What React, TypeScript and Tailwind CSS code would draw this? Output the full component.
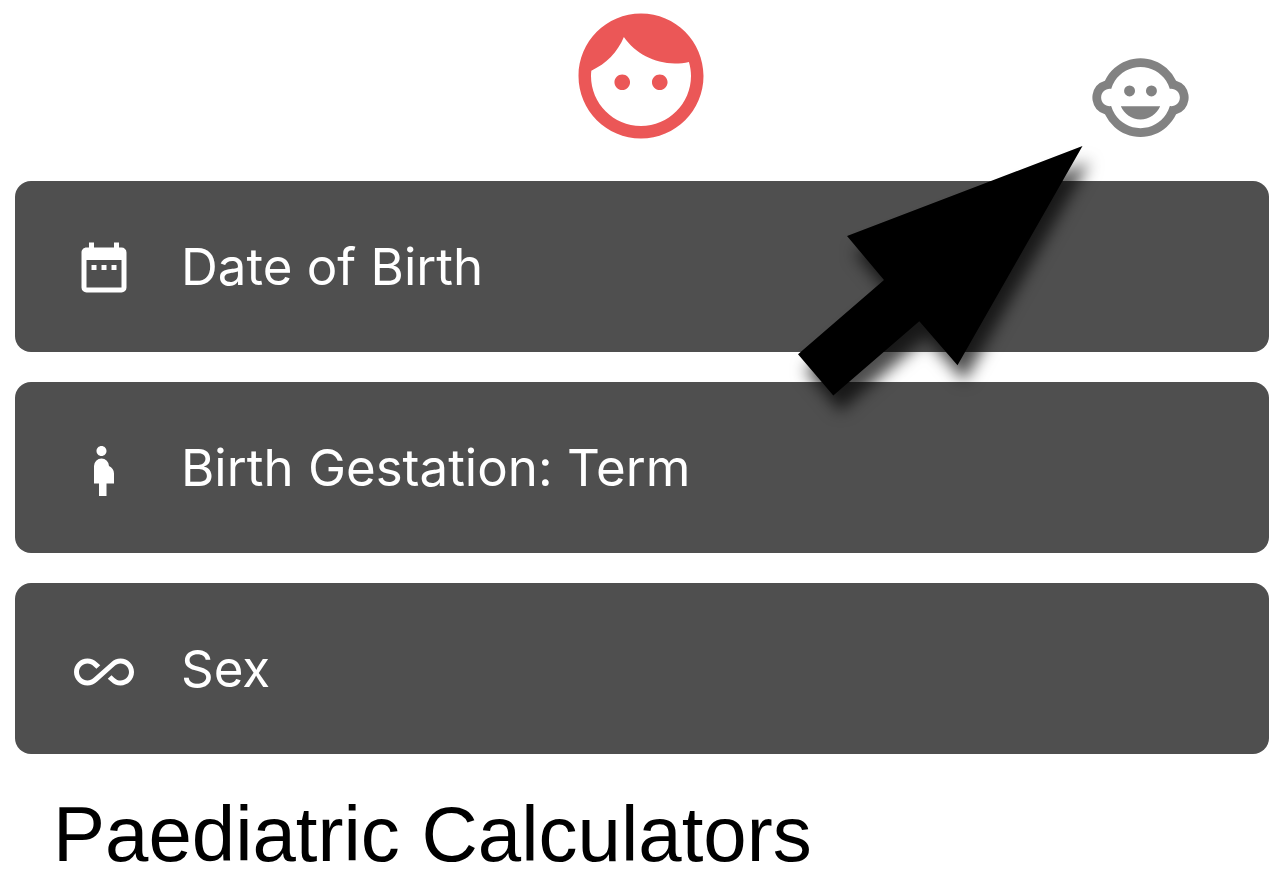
import type { ReactNode } from "react";
import { MdChildCare } from "react-icons/md";

const icons = {
  calendar:
    "M9,10H7V12H9V10M13,10H11V12H13V10M17,10H15V12H17V10M19,3H18V1H16V3H8V1H6V3H5C3.89,3 3,3.9 3,5V19A2,2 0 0,0 5,21H19A2,2 0 0,0 21,19V5A2,2 0 0,0 19,3M19,19H5V8H19V19Z",
  pregnant:
    "M9,4C9,2.89 9.89,2 11,2C12.11,2 13,2.89 13,4C13,5.11 12.11,6 11,6C9.89,6 9,5.11 9,4M16,13C16,11.66 15.17,10.5 14,10A3,3 0 0,0 11,7A3,3 0 0,0 8,10V17H10V22H13V17H16V13Z",
  infinity:
    "M18.6,6.62C17.16,6.62 15.8,7.18 14.83,8.15L7.8,14.39C7.16,15.03 6.31,15.38 5.4,15.38C3.53,15.38 2,13.87 2,12C2,10.13 3.53,8.62 5.4,8.62C6.31,8.62 7.16,8.97 7.84,9.65L8.97,10.65L10.5,9.31L9.22,8.2C8.2,7.18 6.84,6.62 5.4,6.62C2.42,6.62 0,9.04 0,12C0,14.96 2.42,17.38 5.4,17.38C6.84,17.38 8.2,16.82 9.17,15.85L16.2,9.61C16.84,8.97 17.69,8.62 18.6,8.62C20.47,8.62 22,10.13 22,12C22,13.87 20.47,15.38 18.6,15.38C17.7,15.38 16.84,15.03 16.16,14.35L15,13.34L13.5,14.68L14.78,15.8C15.8,16.81 17.15,17.37 18.6,17.37C21.58,17.37 24,14.96 24,12C24,9 21.58,6.62 18.6,6.62Z",
};

function FaceIcon() {
  return (
    <svg viewBox="0 0 24 24" className="size-[150px] fill-[#eb5757]" aria-hidden="true">
      <path d="M9 11.75c-.69 0-1.25.56-1.25 1.25s.56 1.25 1.25 1.25 1.25-.56 1.25-1.25-.56-1.25-1.25-1.25zm6 0c-.69 0-1.25.56-1.25 1.25s.56 1.25 1.25 1.25 1.25-.56 1.25-1.25-.56-1.25-1.25-1.25zM12 2C6.48 2 2 6.48 2 12s4.48 10 10 10 10-4.48 10-10S17.52 2 12 2zm0 18c-4.41 0-8-3.59-8-8 0-.29.02-.58.05-.86 2.36-1.05 4.23-2.98 5.21-5.37C11.07 8.33 14.05 10 17.42 10c.78 0 1.53-.09 2.25-.26.21.71.33 1.47.33 2.26 0 4.41-3.59 8-8 8z" />
    </svg>
  );
}

function PointerArrow() {
  return (
    <svg
      viewBox="780 130 330 310"
      className="pointer-events-none absolute top-[130px] right-[173px] h-[310px] w-[330px]"
      aria-hidden="true"
    >
      <defs>
        <filter id="arrow-shadow" x="-20%" y="-20%" width="140%" height="140%" colorInterpolationFilters="sRGB">
          <feDropShadow dx="7" dy="16" stdDeviation="8" floodColor="#000" floodOpacity="0.7" />
        </filter>
      </defs>
      <polygon
        filter="url(#arrow-shadow)"
        points="1082.5,146 847,236 884,280 798,354.3 833.3,395.5 919.3,321.3 957.5,365.2"
      />
    </svg>
  );
}

function OptionButton({ path, children }: { path: string; children: ReactNode }) {
  return (
    <button
      type="button"
      className="flex h-[171px] w-full items-center gap-[47px] rounded-2xl bg-[#4f4f4f] px-[59px] text-left text-[51px] leading-[60px] text-white"
    >
      <svg viewBox="0 0 24 24" className="mt-1.5 size-[60px] shrink-0 fill-white" aria-hidden="true">
        <path d={path} />
      </svg>
      <span>{children}</span>
    </button>
  );
}

export default function App() {
  return (
    <div className="relative bg-white font-['Inter','Liberation_Sans',sans-serif]">
      <header className="grid grid-cols-[1fr_auto_1fr] items-end pt-px pr-px">
        <button type="button" aria-label="Child" className="col-start-2">
          <FaceIcon />
        </button>
        <button type="button" aria-label="Neonate" className="mr-[89px] mb-px justify-self-end text-[#828282]">
          <MdChildCare className="size-[105px]" />
        </button>
      </header>
      <main className="pt-[30px] pr-[14px] pl-[15px]">
        <div className="flex flex-col gap-[30px]">
          <OptionButton path={icons.calendar}>Date of Birth</OptionButton>
          <OptionButton path={icons.pregnant}>Birth Gestation: Term</OptionButton>
          <OptionButton path={icons.infinity}>Sex</OptionButton>
        </div>
        <h1 className="mt-8 px-[38px] font-['Liberation_Sans',sans-serif] text-[78px] leading-[96px] text-black">
          Paediatric Calculators
        </h1>
      </main>
      <PointerArrow />
    </div>
  );
}
